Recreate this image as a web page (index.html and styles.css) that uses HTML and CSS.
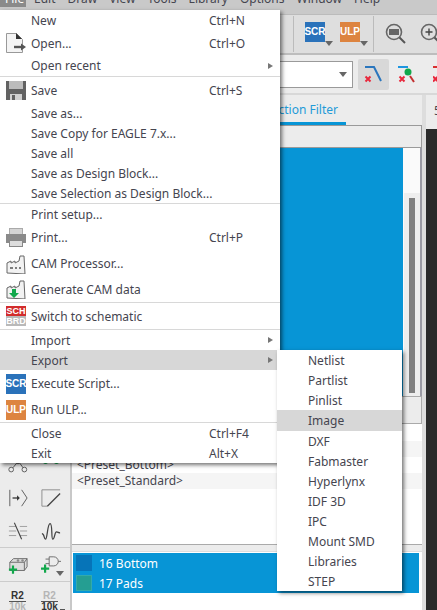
FILE: index.html
```html
<!DOCTYPE html>
<html lang="en">
<head>
  <meta charset="UTF-8">
  <title>Board Editor</title>
  <link rel="stylesheet" href="styles.css">
</head>
<body>
  <div class="app">
    <nav class="menubar">
      <span class="menu-title active">File</span>
      <span class="menu-title">Edit</span>
      <span class="menu-title">Draw</span>
      <span class="menu-title">View</span>
      <span class="menu-title">Tools</span>
      <span class="menu-title">Library</span>
      <span class="menu-title">Options</span>
      <span class="menu-title">Window</span>
      <span class="menu-title">Help</span>
    </nav>

    <div class="toolbar">
      <div class="tool-sep"></div>
      <div class="badge-btn"><span class="badge scr big">SCR</span><i class="drop"></i></div>
      <div class="badge-btn"><span class="badge ulp big">ULP</span><i class="drop"></i></div>
      <div class="tool-sep"></div>
      <svg class="zoom-icon" viewBox="0 0 22 22">
        <circle cx="9" cy="9" r="7.5" fill="none" stroke="#666" stroke-width="1.6"/>
        <rect x="4" y="6" width="10" height="6" fill="#666"/>
        <path d="M14.5 14.5L20 20" stroke="#555" stroke-width="2"/>
      </svg>
      <svg class="zoom-icon" viewBox="0 0 22 22">
        <circle cx="9" cy="9" r="7.5" fill="none" stroke="#666" stroke-width="1.6"/>
        <path d="M5.5 9h7M9 5.5v7" stroke="#444" stroke-width="1.4"/>
        <path d="M14.5 14.5L20 20" stroke="#555" stroke-width="2"/>
      </svg>
    </div>

    <div class="toolbar second">
      <div class="combo"><i class="drop"></i></div>
      <div class="bend selected">
        <svg viewBox="0 0 25 25"><path d="M4 5h9l7 14" fill="none" stroke="#2a76bd" stroke-width="2"/><path d="M4.500 14.500l5 5M9.500 14.500l-5 5" stroke="#e8283c" stroke-width="2"/></svg>
      </div>
      <div class="bend">
        <svg viewBox="0 0 25 25"><path d="M1 5h10" fill="none" stroke="#1e96e0" stroke-width="2"/><circle cx="11" cy="10" r="3.500" fill="#12a84c"/><path d="M13 14l4 6" stroke="#c23030" stroke-width="2"/><path d="M2.500 14.500l5 5M7.500 14.500l-5 5" stroke="#e8283c" stroke-width="2"/></svg>
      </div>
      <div class="bend">
        <svg viewBox="0 0 25 25"><path d="M0 5h10" fill="none" stroke="#d83030" stroke-width="2"/><path d="M0 14.500l5 5M5 14.500l-5 5" stroke="#e8283c" stroke-width="2"/></svg>
      </div>
    </div>

    <div class="workspace">
      <aside class="tools">
        <div class="tool-row">
          <svg viewBox="0 0 22 20"><circle cx="3.500" cy="15" r="2.600" fill="none" stroke="#555"/><circle cx="18" cy="15" r="2.600" fill="none" stroke="#555"/><circle cx="11" cy="6" r="2.600" fill="none" stroke="#555"/><path d="M5.500 13l4-5M13 8l3.500 5" stroke="#555"/></svg>
          <svg viewBox="0 0 22 20"><path d="M2 6h18" stroke="#444"/><circle cx="5" cy="6" r="3" fill="#12a84c"/><circle cx="17" cy="6" r="3" fill="#12a84c"/></svg>
        </div>
        <div class="tool-row">
          <svg viewBox="0 0 22 20"><path d="M2 1v18" stroke="#555"/><path d="M5 10h7" stroke="#333" stroke-width="1.400"/><path d="M10 7l3 3-3 3" fill="#333"/><path d="M15 1l6 9-6 9" fill="none" stroke="#555"/></svg>
          <svg viewBox="0 0 22 20"><path d="M21 1H1v18h6" fill="none" stroke="#888"/><path d="M7 19L21 5" stroke="#444" stroke-width="1.500"/></svg>
        </div>
        <div class="tool-row">
          <svg viewBox="0 0 22 20"><path d="M1 5h8M1 10h8M1 15h8M13 5h8M13 10h8M13 15h8" stroke="#999"/><path d="M7 1l8 18" stroke="#444" stroke-width="1.200"/></svg>
          <svg viewBox="0 0 22 20"><path d="M1 13c3 0 2 6 4 6s2-17 5-17 1 17 3 17 2-8 4-8 2 1 4 1" fill="none" stroke="#444" stroke-width="1.400"/></svg>
        </div>
        <div class="tool-row add">
          <svg viewBox="0 0 22 20"><path d="M2 7l4-4h15v9l-3 4H2z" fill="#ddd" stroke="#666"/><path d="M2 7h16v9M18 7l3-4" fill="none" stroke="#666"/><circle cx="11" cy="5" r="1.400" fill="#888"/><circle cx="16" cy="5" r="1.400" fill="#888"/><path d="M1 15h9M5.500 10.500v9" stroke="#12a84c" stroke-width="2.400"/></svg>
          <svg viewBox="0 0 22 20"><path d="M9 1h5a5 5 0 0 1 0 10H9zM19 6h3M5 3.500h4M5 8.500h4" fill="none" stroke="#666"/><path d="M0 14h9M4.500 9.500v9" stroke="#12a84c" stroke-width="2.400"/></svg>
          <i class="drop tool-drop"></i>
        </div>
        <div class="tool-row values">
          <div class="value-icon"><b class="top">R2</b><b class="dim">10k</b></div>
          <div class="value-icon"><b class="top dim">R2</b><b>10k</b></div>
          <i class="tool-dash"></i>
        </div>
      </aside>

      <section class="center">
        <div class="tabs">
          <span class="tab">Selection Filter</span>
        </div>
        <div class="filter-box"></div>
        <div class="list-area">
          <div class="list-blue"></div>
          <div class="scroll"><div class="thumb"></div></div>
        </div>
        <div class="set-head"></div>
        <div class="presets">
          <div class="preset odd">&lt;Preset_Top&gt;</div>
          <div class="preset">&lt;Preset_Bottom&gt;</div>
          <div class="preset odd">&lt;Preset_Standard&gt;</div>
        </div>
        <div class="splitter"></div>
        <div class="layers">
          <div class="layer-list">
            <div class="layer"><span class="swatch bottom"></span>16 Bottom</div>
            <div class="layer"><span class="swatch pads"></span>17 Pads</div>
          </div>
        </div>
      </section>

      <div class="canvas-side">
        <div class="coord">5</div>
        <div class="canvas"></div>
      </div>
    </div>
  </div>

  <div class="menu file-menu">
    <div class="item h21"><span class="label">New</span><span class="key">Ctrl+N</span></div>
    <div class="item h24">
      <svg class="ico" viewBox="0 0 20 20"><path d="M.500.500h10l6 6v13h-16z" fill="#f4f4f4" stroke="#999"/><path d="M10 0l6 6h-6z" fill="#333"/><path d="M8 14h8" stroke="#555" stroke-width="2.400"/><path d="M15 10.500l5 3.500-5 3.500z" fill="#555"/></svg>
      <span class="label">Open...</span><span class="key">Ctrl+O</span>
    </div>
    <div class="item h21"><span class="label">Open recent</span><i class="arrow"></i></div>
    <div class="sep"></div>
    <div class="item h26">
      <svg class="ico" viewBox="0 0 20 20"><path d="M0 1h20v19H0z" fill="#626262"/><rect x="3" y="1" width="14" height="8" fill="#bcbcbc"/><rect x="4" y="14" width="12" height="6" fill="#d0d0d0"/><rect x="6" y="15" width="3" height="5" fill="#626262"/></svg>
      <span class="label">Save</span><span class="key">Ctrl+S</span>
    </div>
    <div class="item"><span class="label">Save as...</span></div>
    <div class="item"><span class="label">Save Copy for EAGLE 7.x...</span></div>
    <div class="item"><span class="label">Save all</span></div>
    <div class="item"><span class="label">Save as Design Block...</span></div>
    <div class="item"><span class="label">Save Selection as Design Block...</span></div>
    <div class="sep"></div>
    <div class="item"><span class="label">Print setup...</span></div>
    <div class="item h27">
      <svg class="ico" viewBox="0 0 20 20"><rect x="3.500" y="0.500" width="13" height="6" fill="#d4d4d4" stroke="#aaa"/><rect x="0" y="6" width="20" height="9" fill="#8a8a8a"/><rect x="3.500" y="12.500" width="13" height="6" fill="#ddd" stroke="#888"/></svg>
      <span class="label">Print...</span><span class="key">Ctrl+P</span>
    </div>
    <div class="item h25">
      <svg class="ico" viewBox="0 0 20 20"><path d="M1 19V9l4-2v2l4-2v2l4-2 1-5h4l1 18z" fill="#f2f2f2" stroke="#666"/><path d="M4 14h3M9 14h2M13 14h2" stroke="#555" stroke-width="1.400"/></svg>
      <span class="label">CAM Processor...</span>
    </div>
    <div class="item h26">
      <svg class="ico" viewBox="0 0 20 20"><path d="M1 19V9l4-2v2l4-2v2l4-2 1-5h4l1 18z" fill="#f2f2f2" stroke="#666"/><path d="M6 10h4v4h3l-5 5-5-5h3z" fill="#12a84c"/></svg>
      <span class="label">Generate CAM data</span>
    </div>
    <div class="sep"></div>
    <div class="item h26">
      <span class="badge sch">SCH<em>BRD</em></span>
      <span class="label">Switch to schematic</span>
    </div>
    <div class="sep"></div>
    <div class="item"><span class="label">Import</span><i class="arrow"></i></div>
    <div class="item hover"><span class="label">Export</span><i class="arrow"></i></div>
    <div class="item h27"><span class="badge scr">SCR</span><span class="label">Execute Script...</span></div>
    <div class="item h25"><span class="badge ulp">ULP</span><span class="label">Run ULP...</span></div>
    <div class="sep"></div>
    <div class="item"><span class="label">Close</span><span class="key">Ctrl+F4</span></div>
    <div class="item"><span class="label">Exit</span><span class="key">Alt+X</span></div>
  </div>

  <div class="menu export-menu">
    <div class="item"><span class="label">Netlist</span></div>
    <div class="item"><span class="label">Partlist</span></div>
    <div class="item"><span class="label">Pinlist</span></div>
    <div class="item h21 hover"><span class="label">Image</span></div>
    <div class="item"><span class="label">DXF</span></div>
    <div class="item"><span class="label">Fabmaster</span></div>
    <div class="item"><span class="label">Hyperlynx</span></div>
    <div class="item"><span class="label">IDF 3D</span></div>
    <div class="item"><span class="label">IPC</span></div>
    <div class="item"><span class="label">Mount SMD</span></div>
    <div class="item"><span class="label">Libraries</span></div>
    <div class="item"><span class="label">STEP</span></div>
  </div>
</body>
</html>
```

FILE: styles.css
```css
:root {
  --text: #45454f;
  --blue: #0795d6;
  --panel: #ececec;
  --line: #9a9a9a;
}

* {
  box-sizing: border-box;
}

html, body {
  margin: 0;
  height: 100%;
  overflow: hidden;
}

body {
  background: var(--panel);
  color: var(--text);
  font-family: "Noto Sans", sans-serif;
  font-size: 12px;
}

.app {
  display: flex;
  flex-direction: column;
  height: 610px;
}

/* top bars */
.menubar {
  display: flex;
  align-items: flex-end;
  flex: none;
  gap: 12px;
  height: 14px;
  padding-bottom: 7px;
  background: #c9c9c9;
  line-height: 14px;
}

.menu-title {
  flex: none;
  padding-bottom: 1px;
}

.menu-title.active {
  width: 26px;
  margin-right: -4px;
  padding-left: 5px;
  background: #8a8a8a;
  color: #fff;
}

.toolbar {
  display: flex;
  align-items: center;
  flex: none;
  height: 41px;
  padding-left: 293px;
  background: #dedede;
  border-top: 1px solid #bbb;
  border-bottom: 2px solid #bdbdbd;
  overflow: hidden;
}

.tool-sep {
  flex: none;
  width: 1px;
  height: 36px;
  background: #bbb;
}

.badge-btn + .tool-sep {
  margin-left: 9px;
}

.badge-btn {
  display: flex;
  flex: none;
  align-items: flex-end;
  width: 35px;
  margin-left: 11px;
  margin-right: -11px;
  height: 24px;
}

.badge {
  display: flex;
  flex: none;
  align-items: center;
  justify-content: center;
  flex-direction: column;
  width: 20px;
  height: 20px;
  color: #fff;
  font-family: "Liberation Sans", sans-serif;
  font-size: 10px;
  font-weight: bold;
  line-height: 10px;
}

.badge.big {
  align-self: flex-start;
  font-size: 10px;
}

.badge.scr {
  background: #2a72ba;
}

.badge.ulp {
  background: #dd8440;
}

.badge.sch {
  background: #d22c2c;
  font-size: 9px;
  overflow: hidden;
}

.badge.sch em {
  width: 100%;
  background: #b9b9b9;
  font-style: normal;
  text-align: center;
}

.drop {
  display: block;
  flex: none;
  width: 0;
  height: 0;
  border: 4px solid transparent;
  border-top: 5px solid #666;
  border-bottom: 0;
}

.zoom-icon {
  flex: none;
  width: 22px;
  height: 22px;
  margin-left: 11px;
  margin-right: 2px;
}

.toolbar.second {
  gap: 5px;
  height: 40px;
  padding-left: 222px;
  background: var(--panel);
  border-top: 0;
  border-bottom: 2px solid #d8d8d8;
}

.combo {
  display: flex;
  flex: none;
  align-items: center;
  justify-content: flex-end;
  width: 131px;
  height: 27px;
  padding-right: 5px;
  background: #fff;
  border: 1px solid var(--line);
}

.bend {
  flex: none;
  width: 31px;
  height: 31px;
  padding: 3px;
  border-radius: 2px;
}

.bend.selected {
  background: #d8d8d8;
}

/* main area */
.workspace {
  display: flex;
  flex: 1;
  min-height: 0;
}

.tools {
  display: flex;
  flex: none;
  flex-direction: column;
  justify-content: flex-end;
  width: 72px;
  border-right: 2px solid #c8c8c8;
}

.tool-row {
  display: flex;
  position: relative;
  flex: none;
  align-items: center;
  gap: 13px;
  height: 33px;
  padding-left: 8px;
}

.tool-row svg {
  width: 20px;
  height: 20px;
}

.tool-row.add {
  height: 35px;
  border-top: 1px solid #ccc;
  border-bottom: 1px solid #ccc;
}

.tool-drop {
  position: absolute;
  right: 6px;
  bottom: 5px;
}

.tool-dash {
  position: absolute;
  left: 60px;
  bottom: 0;
  width: 5px;
  height: 1px;
  background: #555;
}

.tool-row.values {
  height: 28px;
  align-items: flex-start;
  padding-top: 9px;
  padding-left: 9px;
  gap: 15px;
}

.value-icon {
  display: flex;
  flex-direction: column;
  width: 17px;
  font-family: "Liberation Sans", sans-serif;
  font-size: 10px;
  line-height: 10px;
  text-align: center;
  color: #333;
}

.value-icon .top {
  border-bottom: 1px solid #555;
}

.value-icon .dim {
  color: #b5b5b5;
}

.center {
  display: flex;
  flex: none;
  flex-direction: column;
  width: 350px;
  background: var(--panel);
}

.tabs {
  display: flex;
  flex: none;
  justify-content: flex-end;
  height: 30px;
  padding-right: 76px;
}

.tab {
  height: 30px;
  padding: 6px 8px 0 0;
  border-bottom: 3px solid var(--blue);
  color: #1f9bd8;
  white-space: nowrap;
}

.filter-box {
  flex: none;
  height: 23px;
  border: 1px solid var(--line);
}

.list-area {
  display: flex;
  flex: none;
  height: 248px;
  background: #fafafa;
  border-right: 2px solid #9a9aa4;
}

.list-blue {
  flex: 1;
  background: var(--blue);
}

.scroll {
  display: flex;
  justify-content: center;
  align-items: flex-end;
  flex: none;
  width: 17px;
}

.thumb {
  width: 6px;
  height: 195px;
  margin-bottom: 3px;
  background: #808080;
  box-shadow: 0 0 0 5px #eee;
}

.set-head {
  flex: none;
  height: 28px;
  border: 1px solid #aaa;
}

.presets {
  flex: 1;
  padding-top: 17px;
  background: #fff;
  line-height: 16px;
}

.preset {
  padding-left: 5px;
}

.preset.odd {
  background: #f5f5f5;
}

.splitter {
  flex: none;
  height: 8px;
  border-top: 1px solid #aaa;
  border-bottom: 1px solid #ddd;
}

.layers {
  flex: none;
  height: 58px;
  padding: 1px 3px 0 1px;
  background: #fff;
}

.layer-list {
  height: 40px;
  background: var(--blue);
  color: #fff;
}

.layer {
  display: flex;
  align-items: center;
  gap: 7px;
  height: 20px;
  padding-left: 3px;
}

.swatch {
  width: 16px;
  height: 16px;
}

.swatch.bottom {
  background: #0674b8;
}

.swatch.pads {
  background: #259e92;
  border: 1px solid #3aa;
}

.canvas-side {
  display: flex;
  flex: 1;
  flex-direction: column;
  border-left: 4px solid #ddd;
}

.coord {
  flex: none;
  height: 34px;
  padding: 7px 0 0 8px;
}

.canvas {
  flex: 1;
  background: #2a2a2a;
}

/* popup menus */
.menu {
  position: absolute;
  background: #fff;
  box-shadow: 2px 2px 4px rgba(0, 0, 0, 0.55);
}

.file-menu {
  top: 10px;
  left: 0;
  width: 280px;
}

.export-menu {
  top: 350px;
  left: 277px;
  width: 125px;
}

.item {
  display: flex;
  position: relative;
  align-items: center;
  height: 20px;
  padding-left: 31px;
  white-space: nowrap;
}

.item.h21 { height: 21px; }
.item.h24 { height: 24px; }
.item.h25 { height: 25px; }
.item.h26 { height: 26px; }
.item.h27 { height: 27px; }

.item.hover {
  background: #d7d7d7;
}

.ico, .item > .badge {
  position: absolute;
  left: 6px;
  width: 20px;
  height: 20px;
}

.key {
  position: absolute;
  left: 209px;
}

.arrow {
  position: absolute;
  left: 268px;
  width: 0;
  height: 0;
  border: 3.5px solid transparent;
  border-left: 5px solid #777;
  border-right: 0;
}

.sep {
  height: 1px;
  background: #d8d8d8;
}
```
